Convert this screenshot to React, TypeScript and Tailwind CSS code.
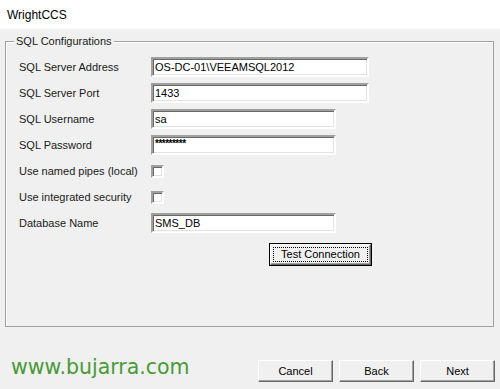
import React from "react";

const sunken =
  "border-t-2 border-l-2 border-b-2 border-r-2 border-t-[#a0a0a0] border-l-[#a0a0a0] border-b-white border-r-white shadow-[inset_1px_1px_0_#696969,inset_-1px_-1px_0_#e3e3e3]";

function TextBox({ value, width }: { value: string; width: string }) {
  return (
    <div className={`${width} h-[20px] bg-white ${sunken} box-border flex items-center pl-[2px] text-[11px] text-black leading-none overflow-hidden`}>
      {value}
    </div>
  );
}

function PasswordBox({ width }: { width: string }) {
  return (
    <div className={`${width} h-[20px] bg-white ${sunken} box-border flex items-center pl-[2px] overflow-hidden`}>
      <span className="text-[10px] tracking-[-0.5px] text-black leading-none font-bold mt-[-3px]">*********</span>
    </div>
  );
}

function CheckBox() {
  return <div className={`w-[13px] h-[13px] bg-white box-border ${sunken}`} />;
}

function Row({ label, children }: { label: string; children: React.ReactNode }) {
  return (
    <div className="h-[26px] flex items-center">
      <div className="w-[145px] shrink-0 pl-[13px] text-[11px] text-[#1a1a1a]">{label}</div>
      {children}
    </div>
  );
}

const raised =
  "border-t border-l border-b border-r border-t-white border-l-white border-b-[#696969] border-r-[#696969] shadow-[inset_-1px_-1px_0_#a0a0a0]";

function Button({ label }: { label: string }) {
  return (
    <div className={`w-[75px] h-[22px] box-border bg-[#f0f0f0] ${raised} flex items-center justify-center text-[11px] text-black`}>
      {label}
    </div>
  );
}

export default function App() {
  return (
    <div
      className="w-[500px] h-[389px] bg-[#f0f0f0] overflow-hidden"
      style={{ fontFamily: '"Liberation Sans", Arial, sans-serif' }}
    >
      <div className="h-[29px] bg-white flex items-center pl-[7px] text-[12px] text-black">WrightCCS</div>

      <div className="relative mt-[12px] ml-[5px] w-[489px] h-[286px] box-border border border-[#a0a0a0] shadow-[inset_1px_1px_0_#ffffff]">
        <span className="absolute left-[8px] top-[-8px] px-[2px] bg-[#f0f0f0] text-[11px] leading-[14px] text-[#1a1a1a]">
          SQL Configurations
        </span>
        <div className="pt-[12px]">
          <Row label="SQL Server Address">
            <TextBox value="OS-DC-01\VEEAMSQL2012" width="w-[218px]" />
          </Row>
          <Row label="SQL Server Port">
            <TextBox value="1433" width="w-[218px]" />
          </Row>
          <Row label="SQL Username">
            <TextBox value="sa" width="w-[185px]" />
          </Row>
          <Row label="SQL Password">
            <PasswordBox width="w-[185px]" />
          </Row>
          <Row label="Use named pipes (local)">
            <CheckBox />
          </Row>
          <Row label="Use integrated security">
            <CheckBox />
          </Row>
          <Row label="Database Name">
            <TextBox value="SMS_DB" width="w-[185px]" />
          </Row>
          <div className="mt-[7px] ml-[263px] w-[103px] h-[23px] box-border border border-black bg-[#f0f0f0]">
            <div className={`w-full h-full box-border ${raised} p-[2px]`}>
              <div className="w-full h-full box-border border border-dotted border-black flex items-center justify-center text-[11px] text-black">
                Test Connection
              </div>
            </div>
          </div>
        </div>
      </div>

      <div className="mt-[33px] flex items-start pl-[11px] pr-[5px]">
        <span
          className="mt-[-3px] text-[20.5px] leading-[20px] text-[#4a9a38] flex-1"
          style={{ fontFamily: '"DejaVu Sans", Verdana, sans-serif' }}
        >
          www.bujarra.com
        </span>
        <div className="flex gap-[6px]">
          <Button label="Cancel" />
          <Button label="Back" />
          <Button label="Next" />
        </div>
      </div>
    </div>
  );
}
